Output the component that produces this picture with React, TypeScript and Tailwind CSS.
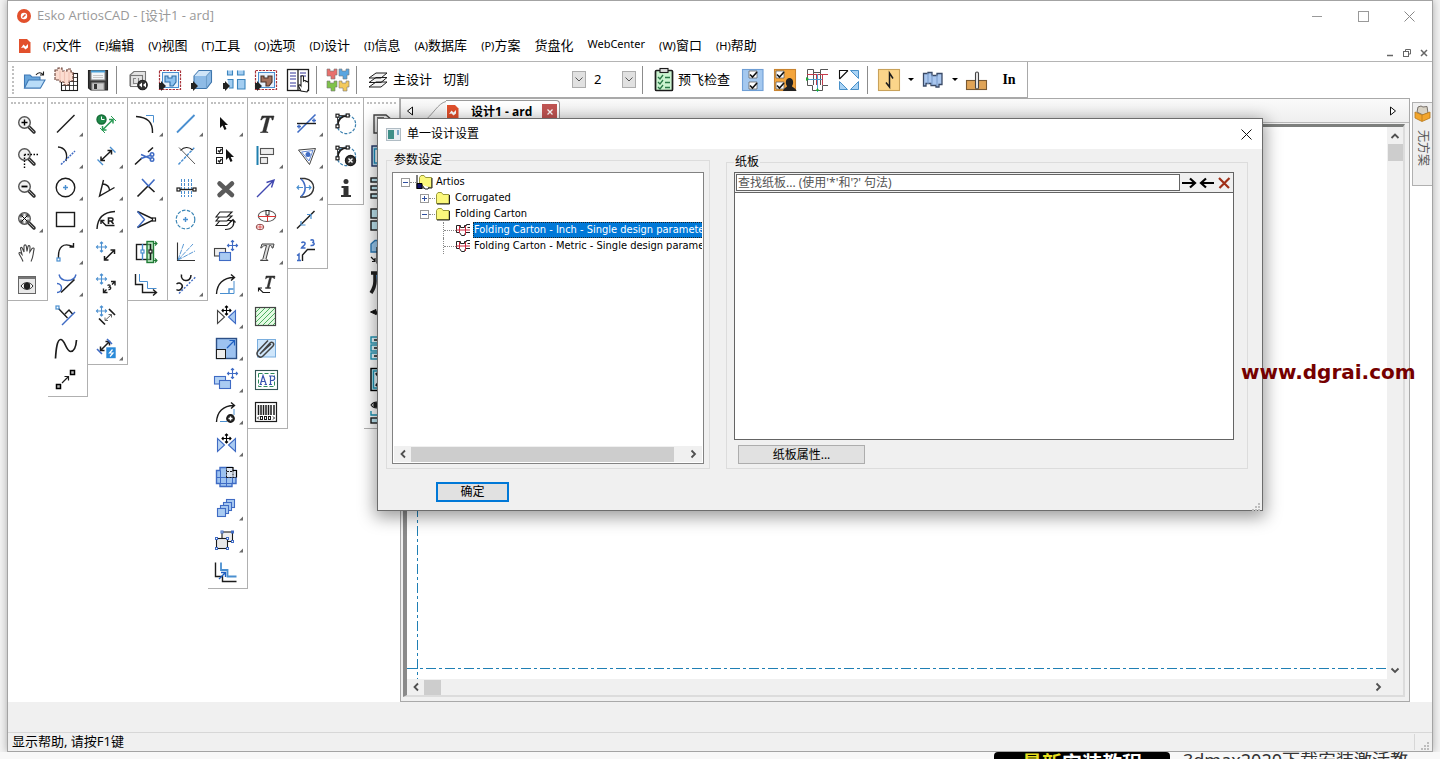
import React, { useState } from 'react';

const BLUE = '#4a8fd0';
const NAVY = '#3f6bc4';
const INK = '#1c1c1c';

type IconProps = { children: React.ReactNode };

// Palette glyphs share one 39x32 cell, toolbar glyphs a 32x32 one
const Cell: React.FC<IconProps> = ({ children }) => (
  <svg width="39" height="32" viewBox="0 0 39 32" fill="none" stroke={INK} strokeWidth="1.4" aria-hidden="true">
    {children}
  </svg>
);

const Tool: React.FC<IconProps> = ({ children }) => (
  <svg width="32" height="32" viewBox="0 0 32 32" fill="none" stroke={INK} strokeWidth="1.1" aria-hidden="true">
    {children}
  </svg>
);

const Move = ({ x, y, r = 5, c = BLUE }: { x: number; y: number; r?: number; c?: string }) => (
  <g transform={`translate(${x} ${y})`} stroke={c} strokeWidth="1.1">
    <path d={`M${-r} 0H${r}M0 ${-r}V${r}`} />
    <path d={`M${-r + 1.5} -1.5L${-r} 0L${-r + 1.5} 1.5M${r - 1.5} -1.5L${r} 0L${r - 1.5} 1.5M-1.5 ${-r + 1.5}L0 ${-r}L1.5 ${-r + 1.5}M-1.5 ${r - 1.5}L0 ${r}L1.5 ${r - 1.5}`} />
  </g>
);

const Node = ({ x, y, c = INK }: { x: number; y: number; c?: string }) => (
  <rect x={x - 1.5} y={y - 1.5} width="3" height="3" stroke={c} fill="#fff" strokeWidth="1.2" />
);

// Free-standing end point, larger than the handles on a shape
const EndPoint = ({ x, y }: { x: number; y: number }) => (
  <rect x={x - 2} y={y - 2} width="4" height="4" stroke="#000" fill="#bbb" strokeWidth="1.5" />
);

const Plus = ({ x, y, r = 2.5, c = BLUE }: { x: number; y: number; r?: number; c?: string }) => (
  <path d={`M${x - r} ${y}H${x + r}M${x} ${y - r}V${y + r}`} stroke={c} />
);

// Double headed arrow running up to the right
const Span = ({ x1, y1, x2, y2, c = INK }: { x1: number; y1: number; x2: number; y2: number; c?: string }) => (
  <path
    d={`M${x1} ${y1}L${x2} ${y2}M${x1} ${y1 - 4}V${y1}H${x1 + 4}M${x2 - 4} ${y2}H${x2}V${y2 + 4}`}
    stroke={c}
    strokeWidth="1.5"
  />
);

const Lens = ({ children }: { children?: React.ReactNode }) => (
  <>
    <path d="M20.5 18.5L26 24" stroke="#333" strokeWidth="3.5" strokeLinecap="round" />
    <path d="M21 19L26 24" stroke="#aaa" strokeWidth="1" />
    <circle cx="16.5" cy="14.5" r="5.8" fill="#f1f1f1" stroke="#555" />
    {children}
  </>
);

const Cursor = ({ x, y }: { x: number; y: number }) => (
  <path d={`M${x} ${y}V${y + 11}L${x + 2.5} ${y + 8.5}L${x + 4.5} ${y + 13}L${x + 6.5} ${y + 12}L${x + 4.7} ${y + 8}H${x + 8}Z`} fill="#111" stroke="none" />
);

const CurvePoints = () => (
  <>
    <circle cx="18.3" cy="16.3" r="9.3" stroke="#3a7fae" strokeWidth="1.2" strokeDasharray="3 1.5" />
    <path d="M9.5 18C10 11 13 8 20 7.5" strokeWidth="2" />
    <path d="M9.5 18V7.5H20" stroke="#444" strokeWidth="1" />
    <Node x={9.5} y={7.7} />
    <Node x={19.7} y={7.5} />
    <Node x={9.5} y={18.3} />
  </>
);

const ZOOM_ICONS = [
  <Lens><Plus x={16.5} y={14.5} r={3} c="#000" /></Lens>,
  <Lens><path d="M16.5 14.5H30M16.5 14.5V28" stroke="#000" strokeDasharray="1.5 1.5" /></Lens>,
  <Lens><path d="M13.5 14.5H19.5" stroke="#000" strokeWidth="1.8" /></Lens>,
  <Lens><path d="M14 12L19 17M19 12L14 17M13 13.5V11H15.5M17.5 11H20V13.5M20 15.5V18H17.5M15.5 18H13V15.5" stroke="#000" strokeWidth="1" /></Lens>,
  <path d="M15 25.500C14 22 12 20 11 17.500C11 16 12.500 16 13.500 18L14 18.500L12.500 12.500C12.500 11 14 11 14.500 12.500L16 16L16 10C16.200 8.500 18 8.500 18.300 10L19 15.500L20 10.500C20.500 9 22 9.500 22 11L21.800 16L24 12.500C25 11.500 26.500 12 26 13.500C25 17 25.500 21 23 25.500" stroke="#444" strokeWidth="1.1" fill="#fff" />,
  <>
    <rect x="10.5" y="8.5" width="17" height="17" fill="#e9e9e9" stroke="#666" strokeWidth="1" />
    <path d="M11 10H27" stroke="#777" strokeWidth="2" />
    <path d="M13 18C16 13.5 22 13.5 25 18C22 22.5 16 22.5 13 18Z" fill="#fff" stroke="#222" strokeWidth="1" />
    <circle cx="19" cy="18" r="2.5" fill="#222" />
  </>,
];

const LINE_ICONS = [
  <path d="M9 24.5L26.5 7" />,
  <><path d="M10 7C17 7.5 20 13 18 21" /><path d="M13 24.5L27 11" stroke={NAVY} strokeDasharray="2 1" strokeWidth="1.5" /></>,
  <><circle cx="17.5" cy="15.5" r="9.3" /><Plus x={17.5} y={15.5} /></>,
  <rect x="8.5" y="8.5" width="18" height="14" />,
  <><path d="M10.5 22C10 11 15 6 25 10.5M25.5 7V11H21.5" /><Node x={10.5} y={23.5} c={BLUE} /></>,
  <><path d="M11 6.5C13 14.5 26 14.5 28 6.5M9 15.5C15 15.5 15 24.5 9 24.5" stroke={NAVY} strokeWidth="1.4" /><path d="M13 24.5L26.5 11.5" strokeWidth="1.6" /></>,
  <><path d="M10 8L19.5 18M17 14L21 10L25 14.5" /><path d="M14 25L27 12" stroke={NAVY} strokeWidth="1.5" /><Node x={9.5} y={7.5} c={BLUE} /></>,
  <path d="M7.5 26.5C8 18 9 7 13 7.5C17 8 18 19 22.500 19.500C26 19.500 28 15 28.500 8" strokeWidth="1.7" />,
  <><EndPoint x={10.5} y={22.5} /><EndPoint x={24.5} y={8.5} /><path d="M14 19L20.500 12.500M16.500 12.500H20.500V16.500" strokeWidth="1.2" /></>,
];

const DIMENSION_ICONS = [
  <><Span x1={14.5} y1={22} x2={25} y2={11.5} c="#2a9a55" /><path d="M12 20L17 25M23 8L28 13" stroke="#2a9a55" strokeWidth="1" /><circle cx="13.5" cy="11.5" r="4.5" fill="#1f8a4a" stroke="#146b36" /><path d="M13.5 8.5V11.5H16.5" stroke="#fff" strokeWidth="1" /></>,
  <><Span x1={13} y1={20.5} x2={23.5} y2={10.5} /><path d="M9.5 19.5L15 25M22 7L27.5 12.5" stroke={BLUE} strokeWidth="1.4" /></>,
  <><path d="M15.5 8L11.5 24L26.5 15.5" /><path d="M14.5 12C19 12 21.5 15 21.5 18" /></>,
  <><path d="M9 25C9.5 14 15 8 27 7.5M26.5 21.5H18L13 16.5M13 20V16.5H16.5" /><path d="M20.5 20V14H23.5C25.5 14 25.5 17 23.5 17H20.5M23 17L25.5 20" strokeWidth="1.6" /></>,
  <><Move x={13.5} y={11} /><Span x1={16.5} y1={24} x2={26.5} y2={14} /></>,
  <><Move x={13.5} y={11} /><path d="M15.5 20.5V24.5H19.5M23 13.5H27V17.500M15.500 24.500L18.500 21.500M24 16.500L27 13.500" strokeWidth="1.4" /><path d="M19.500 17.500C21.500 16 23 17.500 21.500 19C23.500 19 23 22 20.500 21.500" strokeWidth="1.3" /></>,
  <><Move x={13.5} y={11} /><path d="M21 9L27 15M11 18.5L17 24.5" strokeWidth="1.7" /><path d="M17 20.5L23.500 14.500M17 17.500V20.500H20M20.500 14.500H23.500V17.500" stroke="#666" strokeWidth="1" /></>,
  <><Span x1={12.5} y1={18.5} x2={21.5} y2={9.5} /><path d="M9 17L14 22M19 7L24 12" stroke={NAVY} strokeWidth="1.6" /><rect x="19" y="16" width="8" height="9.5" fill="#2b8bd9" stroke="#2b8bd9" /><path d="M24.5 17.5L21.5 21H25L22 24.5" stroke="#fff" strokeWidth="1.2" /></>,
];

const EDIT_ICONS = [
  <><path d="M8 8.5C19 9 25 14 24.5 25" /><path d="M18 7.5H25.5V14.5" stroke={BLUE} strokeWidth="1" /></>,
  <><path d="M7 24.5L14 18M20 12L25 7.5" strokeWidth="1.6" /><path d="M13 14.5L23.5 19M13 18.5L23.5 15" stroke={NAVY} strokeWidth="1.4" /><circle cx="24" cy="14.5" r="1.8" stroke={NAVY} /><circle cx="24" cy="19.5" r="1.8" stroke={NAVY} /></>,
  <><path d="M9.5 24.5L20 14L26.5 20" strokeWidth="1.6" /><path d="M14 7L20.500 14L26.500 7.500" stroke={NAVY} strokeWidth="1.6" /></>,
  <><path d="M9.5 7.5L26.5 15.5L9.5 23.5" /><path d="M9.5 7.5L16.500 15.500L9.500 23.500" stroke={NAVY} /><Node x={26} y={15.5} /></>,
  <><rect x="8.5" y="8.5" width="14" height="15" /><path d="M14.5 8V24" stroke={BLUE} /><rect x="19" y="5.5" width="6.5" height="21" fill="#7ad58a" fillOpacity="0.5" stroke="#1f7a35" /><path d="M22.5 8V24" /><Node x={14.5} y={15.5} c={BLUE} /><Node x={22.5} y={15.5} /><path d="M25 7.5H29M27 5.5L29 7.5L27 9.5M25 24.5H29M27 22.5L29 24.5L27 26.5" stroke="#1f7a35" strokeWidth="1.1" /></>,
  <><path d="M7.5 6V16.5H14.5V24.5H28M25 21.5L28.500 24.500L25 27.500" /><path d="M11.5 6V13.5H19.5V20.5H28.5" stroke={BLUE} strokeWidth="1" /></>,
];

const CONSTRUCTION_ICONS = [
  <path d="M9 24.5L26.5 7" stroke={BLUE} strokeWidth="1.8" />,
  <><path d="M10.5 24.5L26.5 7.5" stroke={BLUE} strokeDasharray="3 1" /><path d="M11 7.5L27 24" stroke="#333" strokeWidth="0.8" /><path d="M12.5 10.5C16 6.5 21 6.5 24.5 10" strokeWidth="1.1" /></>,
  <><path d="M13.5 7V25M16.5 7V25M20.5 7V25M23.5 7V25" stroke={BLUE} strokeWidth="1" strokeDasharray="3 1" /><path d="M10.5 17.5H26.5" /><Node x={10.5} y={17.5} /><Node x={26.5} y={17.5} /></>,
  <><circle cx="17.5" cy="15.5" r="9.3" stroke="#3a85b5" strokeWidth="1.2" strokeDasharray="3.5 1.5" /><Plus x={17.5} y={15.5} /></>,
  <><path d="M9.5 6.5V24.5H27" stroke="#333" strokeWidth="1.1" /><path d="M10 24L16 7M10 24L25 8M10 24L27 15" stroke={BLUE} strokeWidth="0.9" strokeDasharray="5 1" /></>,
  <><path d="M13.5 6.5C12 14 23 15 23 7M8.5 16C12 13.5 16 17 13.5 20.5C12 23 9.5 22.5 8.5 21.5" strokeWidth="1.5" /><path d="M11 25.5L28 8.5" stroke={NAVY} strokeDasharray="2 1.5" strokeWidth="1.4" /></>,
];

const Mirror = ({ filled = false }: { filled?: boolean }) => (
  <>
    <path d="M9.5 10.5V23.5L16.5 17Z" fill={filled ? '#b9d4f3' : '#fff'} stroke={filled ? NAVY : '#444'} strokeWidth="1.1" />
    <path d="M27.5 10.5V23.5L20.5 17Z" fill="#a9cbf2" stroke={NAVY} strokeWidth="1.1" />
    <Move x={18.5} y={10.5} r={4.5} c="#000" />
  </>
);

const MoveCopy = ({ filled = false }: { filled?: boolean }) => (
  <>
    <rect x="6.5" y="12.5" width="11" height="7.5" fill={filled ? '#b4d2f4' : '#eee'} stroke={filled ? NAVY : '#444'} strokeWidth="1.1" />
    <rect x="11.5" y="16.5" width="11" height="8" fill="#a9cbf2" stroke={NAVY} strokeWidth="1.1" />
    <Move x={24.5} y={9.5} c={NAVY} />
  </>
);

const SELECT_ICONS = [
  <Cursor x={12} y={9} />,
  <><rect x="8.5" y="7.5" width="6" height="6" strokeWidth="1" /><rect x="8.5" y="17.5" width="6" height="6" strokeWidth="1" /><path d="M10 10.5L11.5 12L13.5 9M10 20.5L11.5 22L13.5 19" /><Cursor x={18} y={9} /></>,
  <path d="M11.5 11.5L24 23M24 11.5L11.5 23" stroke="#5a5a5a" strokeWidth="4.5" strokeLinecap="round" />,
  <><path d="M8 21.500H19L24 16.500H12Z" fill="#fff" strokeWidth="1.1" /><path d="M8 17H19L24 12H12Z" fill="#fff" strokeWidth="1.1" /><path d="M8 13H19L24 8H12Z" fill="#fff" strokeWidth="1.1" /><path d="M17 25.500C25 25.500 27 20 25 16M22 18L25 15.500L27.500 18.500" strokeWidth="1.2" /></>,
  <MoveCopy />,
  <><path d="M8.5 26C9 16 15 9.5 26 9.5M23 6.5L26.5 9.5L23 12.5" /><path d="M12 25.5H26V13" stroke={BLUE} strokeWidth="1" /><path d="M21 25V21H25.5" stroke={BLUE} /></>,
  <Mirror />,
  <><rect x="8.5" y="6.5" width="20" height="20" fill="#9dc2f0" stroke="#2c4f86" /><rect x="8.5" y="17.5" width="9" height="9" fill="#eee" strokeWidth="1" /><path d="M19 16L26 9M21.5 8.5H26.5V13.5" stroke="#1f5fc0" strokeWidth="1.2" /></>,
  <MoveCopy filled />,
  <><path d="M8.5 26C9 16 15 9.5 26 9.5M23 6.5L26.5 9.5L23 12.5" /><path d="M12 25.5H19M26 13V19" stroke={BLUE} strokeWidth="1" /><circle cx="22.5" cy="22.5" r="3.7" fill="#222" /><Plus x={22.5} y={22.5} r={2} c="#fff" /></>,
  <Mirror filled />,
  <><path d="M12 7.5H24V10.5H28V23.5H24V26.5H12V23.5H8.5V10.5H12Z" fill="#9dc2f0" stroke={NAVY} /><path d="M12.5 10.5V23.5M18.5 7.5V26.5M24.5 10.5V23.5M8.5 17.5H28M12 23.5H24" stroke={NAVY} strokeWidth="1" /><path d="M18.5 7.5H25V10.5H28.5V17H18.5Z" fill="#dce4ef" stroke="none" /><path d="M18.5 17.5V7.5M18.5 17.5H28M25 10.5V17M19 11.5H25" strokeWidth="1" strokeDasharray="2 1" /><path d="M18.5 7.5H25V10.5H28.5V17.5" stroke="#000" strokeWidth="1.2" /></>,
  <>{[0, 1, 2, 3].map(n => <rect key={n} x={18.5 - n * 3} y={7.5 + n * 3} width="8" height="8" fill="#a9cbf2" stroke={NAVY} strokeWidth="1.1" />)}</>,
  <><rect x="14" y="8" width="10.5" height="9.5" fill="#eee" strokeWidth="1.1" /><rect x="8.5" y="14.5" width="11" height="10" fill="#e8e8e8" strokeWidth="1.1" />{[[14, 8], [24.5, 8], [24.5, 17.5], [8.5, 14.5], [19.5, 14.5], [8.5, 24.5], [19.5, 24.5]].map(([x, y]) => <rect key={`${x}-${y}`} x={x - 1} y={y - 1} width="2" height="2" fill="#fff" stroke={NAVY} strokeWidth="1" />)}</>,
  <><path d="M7.5 6.5V20.5H14.5V25.5H28.5" /><path d="M13 6.5V14H19.5V20.5H28.5" stroke={BLUE} strokeWidth="1.8" /><path d="M11 23L17 17M13 16.5H17.5V21" stroke="#1f5fc0" /></>,
];

const TEXT_T = 'M14 8H26L25 12H24C24 10 23.5 9.5 21.5 9.5L18 23C18 23.5 19 24 20 24V24.5H12.5V24C14 24 14.5 23.5 15 22.5L18.5 9.5C16 9.5 14.5 10 13.5 12H12.7Z';

const ANNOTATE_ICONS = [
  <path d={TEXT_T} fill="#333" strokeWidth="0.5" />,
  <><path d="M9.5 6V25" stroke="#1f7fae" strokeWidth="2" /><rect x="12.5" y="8.5" width="13" height="6" fill="#eee" stroke="#555" strokeWidth="1.1" /><rect x="12.5" y="17.5" width="7" height="6" fill="#eee" stroke="#555" strokeWidth="1.1" /></>,
  <path d="M9 25L25.5 8.5M18.5 10.5L26 8L23.5 15.5" stroke="#4148b0" strokeWidth="1.4" />,
  <><ellipse cx="19" cy="12" rx="8.7" ry="5.5" fill="#fff" stroke="#555" strokeWidth="1.1" /><path d="M10 12.5H28M19.5 6.5V17.5" stroke="#d33" strokeWidth="1" /><rect x="18" y="6.5" width="3" height="4.5" fill="#fff" strokeWidth="0.9" /><ellipse cx="12" cy="23" rx="3.8" ry="2.7" stroke="#833" strokeWidth="0.9" /><path d="M9 23H15M12 21V25" stroke="#d33" strokeWidth="0.8" /></>,
  <path d={TEXT_T} fill="#ddd" stroke="#444" strokeWidth="1" />,
  <><path d="M18 8H27L26.5 11C25.5 9.5 25 9.5 23.5 9.5L21 19.5H22.5V20.5H17.5V19.5H19L21.5 9.5C20 9.5 19 9.5 17.5 11Z" fill="#333" strokeWidth="0.4" /><path d="M22 24.5H15L10.5 20M10.5 23.500V20H14" strokeWidth="1.1" /></>,
  <><rect x="7.5" y="7.5" width="20" height="18" fill="#e3fbe3" stroke="#444" strokeWidth="1.2" /><path d="M8 12L12 8M8 17L17 8M8 22L22 8M10 25L27 8M15 25L27 13M20 25L27 18M25 25L27 23" stroke="#2a9a40" strokeWidth="0.8" /></>,
  <><rect x="9.5" y="7.5" width="18" height="17.5" fill="#cfe6fb" stroke="#7aaede" strokeWidth="1" /><path d="M12 22L22 11C24 9 27 11.5 25 14L15 24C12 27 7 23 10 19L20 8.5M14 20L23 12" stroke="#444" strokeWidth="1.5" /></>,
  <><rect x="7.5" y="6.5" width="22" height="19" fill="#fff" stroke="#355" strokeWidth="1.1" /><rect x="10.5" y="9.5" width="16" height="13" stroke="#2a8a5a" strokeDasharray="4 2" strokeWidth="1" /><path d="M11.5 20.5H14M16.5 20.5H19M12.5 20L15 11.5L18 20M13.5 17.5H17M21 20.5H24M22.5 20V12M21 12H24.5C27.5 12 27.5 16.5 24 16.5H22.5" stroke="#3a55b0" strokeWidth="1.2" /></>,
  <><rect x="7.5" y="6.5" width="21" height="19" fill="#fff" strokeWidth="1.2" /><path d="M10.5 9V19M13 9V19M15.5 9V19M18 9V19M20.5 9V19M23 9V19M26 9V19" strokeWidth="1.5" /><path d="M11 20.5L9.5 22L11 23.5M25 20.5L26.5 22L25 23.500" strokeWidth="1" /><rect x="12.5" y="20.5" width="2" height="3" strokeWidth="1" /><rect x="16.5" y="20.5" width="2" height="3" strokeWidth="1" /><rect x="20.5" y="20.5" width="2" height="3" strokeWidth="1" /></>,
];

const LINK_ICONS = [
  <><path d="M9.5 24.5L27.5 6.5" stroke={NAVY} strokeWidth="1.6" /><path d="M9 15.5H28" /><Plus x={11} y={18.5} r={2} c={NAVY} /><Plus x={26} y={12.5} r={2} c={NAVY} /></>,
  <><path d="M10.5 10L27.5 8.5L21.5 24.5Z" stroke="#444" strokeWidth="1" /><path d="M13.500 12L25 10.500L21 21Z" stroke={NAVY} strokeWidth="0.8" /><circle cx="20" cy="14.500" r="2.500" fill={NAVY} stroke="none" /></>,
  <><path d="M12 6.5H17C28.5 8 28.5 23 17 25H12" stroke="#333" /><path d="M13 7C18.5 12 18.5 20 13 24.5" stroke={NAVY} strokeWidth="1.6" /><path d="M9 15.5H15M11 13.5L9 15.5L11 17.5M18 15.5H23M21 13.5L23 15.5L21 17.5" stroke={BLUE} strokeWidth="1.1" /></>,
  <><path d="M9 24.5L26.5 7" /><path d="M13 17V21H17.5M19 10.5H23V15" stroke={BLUE} strokeWidth="1.2" /></>,
  <><path d="M14.5 25V19L19.5 13.5H27" /><path d="M9 19.5L11 18V24.5M9 24.5H13M13.5 7C14.5 5.5 17.5 6 17 8C17 9.5 14 10.5 13.5 12H17.5M22.5 4.5C24 3 26.5 4 25 6.5C27 7 26.5 10 22.5 9.5" stroke={NAVY} strokeWidth="1.5" /></>,
];

const INFO_ICONS = [
  <CurvePoints />,
  <><CurvePoints /><circle cx="22.5" cy="20.5" r="5" fill="#333" /><path d="M20.5 18.5L24.5 22.5M24.5 18.5L20.5 22.5" stroke="#fff" /></>,
  <><circle cx="18" cy="9.5" r="2.5" fill="#333" stroke="none" /><path d="M13.5 14H20.5V23H23V25H13V23H15.5V16H13.5Z" fill="#333" stroke="none" /></>,
];

const LAYOUT_ICONS = [
  <path d="M10 7H22L28 12V25H10ZM13 10H20M13 13H22" fill="#eee" stroke="#444" />,
  <><rect x="8" y="6" width="20" height="20" fill="#bfe3f5" stroke="#236" /><rect x="10.5" y="9" width="15" height="14" fill="#fff" stroke="#1b8fc0" /></>,
  <>{[6, 14, 22].map(y => <rect key={y} x="7" y={y} width="20" height="4" fill="#c4ecf8" />)}</>,
  <>{[5, 17].map(y => <rect key={y} x="7" y={y} width="18" height="9" fill="#c4ecf8" />)}</>,
  <><path d="M7 8L11 4.500H24V16H7Z" fill="#9dcdf3" stroke="#2d79b5" /><path d="M7 21L11 25M11 22V25.500H8M13 11V27H20" strokeWidth="1.2" /></>,
  <><path d="M7 5H20M11 6V13C11 18 9 22 7 25" stroke="#222" strokeWidth="3.5" /><path d="M12 7H18V14H13Z" fill={BLUE} stroke="none" /></>,
  <><path d="M6.500 12L12 9.500V14.500Z" fill="#111" strokeWidth="1" /><path d="M11 12C14 12 14 17 18 20" strokeWidth="2.5" /></>,
  <>{[5, 13, 21].map(y => <rect key={y} x="7" y={y} width="20" height="6" fill="#e8faff" stroke="#1b94b5" />)}<path d="M10 8H14M10 16H14M10 24H14" /></>,
  <><rect x="7" y="4.5" width="22" height="22" fill="#bdeaf5" stroke="#000" /><rect x="9.5" y="7" width="18" height="17" fill="#e8faff" stroke="#1b94b5" /><path d="M12 9L17 15.5L12 22" strokeWidth="2.5" /></>,
  <><path d="M7 9C10 5 15 5 18 9C15 13 10 13 7 9Z" strokeWidth="1.1" /><circle cx="12" cy="9" r="2" fill="#222" /><path d="M7 15V19H20" stroke="#1b94b5" /><rect x="7" y="22" width="20" height="5" fill="#c4ecf8" /></>,
];

type Palette = { name: string; icons: React.ReactNode[]; flyouts: number[]; narrow?: boolean };

const PALETTES: Palette[] = [
  { name: 'View', icons: ZOOM_ICONS, flyouts: [3] },
  { name: 'Geometry', icons: LINE_ICONS, flyouts: [0, 1, 2, 3, 4, 5] },
  { name: 'Dimension', icons: DIMENSION_ICONS, flyouts: [1, 2, 3, 7] },
  { name: 'Edit', icons: EDIT_ICONS, flyouts: [0, 2] },
  { name: 'Construction', icons: CONSTRUCTION_ICONS, flyouts: [0, 5] },
  { name: 'Select', icons: SELECT_ICONS, flyouts: [0, 5, 6, 7, 8, 9, 10, 12, 13] },
  { name: 'Annotate', icons: ANNOTATE_ICONS, flyouts: [1, 3, 4] },
  { name: 'Link', icons: LINK_ICONS, flyouts: [0, 1, 2] },
  { name: 'Info', icons: INFO_ICONS, flyouts: [], narrow: true },
  { name: 'Layout', icons: LAYOUT_ICONS, flyouts: [], narrow: true },
];

const MENUS = [
  ['(F)', '文件'], ['(E)', '编辑'], ['(V)', '视图'], ['(T)', '工具'], ['(O)', '选项'], ['(D)', '设计'], ['(I)', '信息'],
  ['(A)', '数据库'], ['(P)', '方案'], ['', '货盘化'], ['WebCenter', ''], ['(W)', '窗口'], ['(H)', '帮助'],
];

const FILE_TOOLS = [
  <><path d="M6.5 24V11H12L14 13H22V24Z" fill="#6aa7dc" stroke="#3f79b5" /><path d="M6.5 24L10.5 16H27L22.5 24Z" fill="#b9dcf8" stroke="#3f79b5" /><path d="M18 11C20 8 23 8 25 10.5M25.5 7.5V11H22" /></>,
  <><rect x="11.5" y="9.5" width="16" height="17" fill="#fff" /><path d="M11 13.5H27M11 17.5H27M11 21.5H27M15.5 9V27M19.5 9V27M23.5 9V27" strokeWidth="0.8" /><path d="M5 6H8V4H12V7H17V5H21V8H23V17H19V21H14V18H10V16H5Z" fill="#fbdcd0" stroke="#6a4339" strokeDasharray="3 1" /><path d="M10 7V17M14.5 7V18M19 8V18" stroke="#eec2b4" /></>,
  <><path d="M6.5 6.5H25.5V26H9L6.5 24Z" fill="#3a3a3a" stroke="#222" /><rect x="9" y="7" width="14" height="9" fill="#f2f6f8" stroke="#888" /><path d="M9 7.5H23" stroke="#49a0d8" strokeWidth="2" /><path d="M11 11.5H21M11 13.5H21" stroke="#bbb" strokeWidth="0.8" /><rect x="10" y="19" width="12" height="7" fill="#ccc" stroke="#999" /><rect x="12" y="20" width="3" height="5" fill="#333" stroke="none" /></>,
];

const EnterArrow = () => <path d="M5 19H7V17L12 22L7 27V25H5Z" fill="#222" stroke="none" />;

const Frame = ({ c, edge }: { c: string; edge: string }) => (
  <>
    <rect x="8.5" y="8.500" width="16" height="15" fill="#e6f1fb" stroke={BLUE} strokeWidth="1" />
    <rect x="5.5" y="6.5" width="21" height="19" stroke="#a8323a" strokeWidth="1.2" strokeDasharray="2.5 1" />
    <path d="M11 12H14V14H18V12H22V18L19 22H16V18H11Z" fill={c} stroke={edge} />
    <EnterArrow />
  </>
);

const MODE_TOOLS = [
  <><path d="M8 22V11L12 7.5H23.5V18" stroke="#777" fill="#e4e4e4" /><rect x="8.5" y="11.5" width="12" height="11" stroke="#777" /><path d="M14 14.5H11.5V19.5H15M16.5 14V18" stroke="#888" /><circle cx="20.5" cy="21" r="4.8" fill="#333" /><path d="M20 18.5V23.5L17 21ZM24 18.5V23.5L21 21Z" fill="#fff" stroke="none" /></>,
  <Frame c="#8ec2ef" edge="#2c6da8" />,
  <><path d="M8 12L13 6.5H25.5V18L20.5 24.5H8Z" fill="#8ebbe6" stroke="#3d75ac" /><path d="M8.5 12L13 7H25L20.500 12Z" fill="#cfe4f7" stroke="none" /><path d="M20.5 12V24.500M20.500 12L25.500 6.500" stroke="#6f9fcb" /><EnterArrow /></>,
  <><path d="M9.5 6.5V11H14.5V6.500M19.500 6.500V11H26V6.500M19.500 15.500H27V25H19.500Z" fill="#a3cdf1" stroke="#3b84bd" /><path d="M9.500 15.500H15V24H11" fill="#a3cdf1" stroke="#3b84bd" /><EnterArrow /></>,
  <Frame c="#a2705c" edge="#4a332b" />,
  <><rect x="5.5" y="5.5" width="21" height="21" fill="#fff" strokeWidth="1.3" /><path d="M16 5V27" strokeWidth="1.3" /><path d="M8 9H14M8 12H14M8 15H14M8 19H14M8 22H14M18 9H24M18 12H24" stroke="#33379a" /><path d="M19 27L16.5 22C16.5 20.5 18 20.5 19 22V12.5C19.5 11.5 21 11.5 21.5 12.5V17C22.5 16 24 16.5 24 17.5C25 17 26.5 18 26.5 19V25L25 28Z" fill="#fff" /></>,
];

const Shape = ({ x, y, c }: { x: number; y: number; c: string }) => (
  <path d={`M${x} ${y}H${x + 3}V${y + 2}H${x + 7}V${y}H${x + 10}V${y + 6}L${x + 8} ${y + 6}V${y + 10}H${x + 4}V${y + 7}H${x}Z`} fill={c} stroke="#777" strokeWidth="0.6" />
);

const CHECK_TOOLS = [
  <><rect x="5.5" y="5.5" width="20.5" height="21" fill="#a4c8ef" stroke="#6f9fd6" /><path d="M12 7H20V14H12ZM12 18H20V25H12Z" fill="#fff" stroke="#666" strokeWidth="0.8" /><path d="M13 10.5L15.5 13L20 8M13 21.5L15.5 24L20 19" stroke="#111" strokeWidth="1.6" /></>,
  <><rect x="5.5" y="5.5" width="21" height="21" fill="#f4a53c" stroke="#c98430" /><path d="M7 7H15V14H7ZM7 18H15V25H7Z" fill="#fff" stroke="#666" strokeWidth="0.8" /><path d="M8 10.5L10.5 13L15 8M8 21.5L10.5 24L15 19" stroke="#111" strokeWidth="1.6" /><path d="M14 27C15 23.5 18 23.5 18 22C16 19.5 16.5 14 20.5 14C24.5 14 25 19.5 23 22C23 23.5 26.5 23.5 27.5 27Z" fill="#222" stroke="none" /></>,
  <><path d="M6.5 5.500H12.500V8.500H19.500V5.500H27M27 21.500H21.500V26.500H11.500V21.500H6.500V5.500M12.500 8V21M19.500 8V21" stroke="#555" strokeWidth="1" /><path d="M6 10.5H27M15.5 10V21M21.5 10V21" stroke="#c43a4a" strokeWidth="1" /><path d="M5 15.5H21M16.5 10V28" stroke="#4b9bd0" strokeWidth="1" /><path d="M5 13V17L8 15ZM14.5 27H18.5L16.5 24Z" fill="#2a3" stroke="none" /></>,
  <><path d="M6.5 15V6.5H15M6.5 15L15 6.5" stroke="#111" /><path d="M17.5 6.5H25.5V14.5ZM25.5 17.5V25.500H17.500ZM6.500 17.500V25.500H14.500Z" fill="#a9d3f5" stroke="#4990c8" strokeWidth="1" /></>,
];

const Separator = () => (
  <span className="flex w-2 shrink-0 pl-0.5"><span className="h-7 w-px bg-[#8c8c8c]" /></span>
);

const ToolButton = ({ label, children }: { label: string; children: React.ReactNode }) => (
  <button type="button" aria-label={label} className="w-8 shrink-0"><Tool>{children}</Tool></button>
);

const Caret = ({ label }: { label: string }) => (
  <button type="button" aria-label={label} className="flex w-3 justify-center">
    <svg width="6" height="4" viewBox="0 0 6 4" aria-hidden="true"><path d="M0 0H6L3 3Z" fill="#000" /></svg>
  </button>
);

const Chevron = ({ turn, c = '#505050' }: { turn: 'up' | 'down' | 'left' | 'right'; c?: string }) => {
  const d = { up: 'M1.5 7L5 3.5L8.5 7', down: 'M1.5 3.5L5 7L8.5 3.5', left: 'M7 1.5L3.5 5L7 8.5', right: 'M3.5 1.5L7 5L3.5 8.5' }[turn];
  return <svg width="10" height="10" viewBox="0 0 10 10" fill="none" stroke={c} strokeWidth="1.8" aria-hidden="true"><path d={d} /></svg>;
};

const DropDown = ({ label, value, options, width, onChange }: { label: string; value: string; options: string[]; width: string; onChange: (v: string) => void }) => (
  <span className={`relative flex h-6 items-center ${width}`}>
    <select
      aria-label={label}
      value={value}
      onChange={e => onChange(e.target.value)}
      className="h-full w-full appearance-none bg-transparent pl-1 outline-none"
    >
      {options.map(o => <option key={o}>{o}</option>)}
    </select>
    <span className="pointer-events-none absolute right-0 flex h-[17px] w-[14px] items-center justify-center border border-[#adadad] bg-[#e1e1e1]">
      <svg width="8" height="5" viewBox="0 0 8 5" fill="none" stroke="#555" aria-hidden="true"><path d="M0.5 0.5L4 4L7.5 0.5" /></svg>
    </span>
  </span>
);

const DocIcon = () => (
  <svg width="13" height="14" viewBox="0 0 13 14" aria-hidden="true">
    <path d="M1 0H9L12.5 3.5V14H1Z" fill="#e2502c" />
    <path d="M3 9L5.5 5.5L7.5 7.5L10 5V8.5L7.5 10.5L5.5 8.5Z" fill="#fff" />
  </svg>
);

const TitleBar = () => (
  <header className="flex h-[30px] shrink-0 items-center bg-white pl-2 text-[13px] text-[#999]">
    <svg width="16" height="16" viewBox="0 0 16 16" aria-hidden="true">
      <circle cx="8" cy="8" r="7" fill="#e2502c" />
      <circle cx="8" cy="8" r="3.2" fill="#fff" />
      <path d="M6.5 9.5L9.5 6.5" stroke="#e2502c" strokeWidth="1.5" />
    </svg>
    <h1 className="ml-[5px] font-['Open_Sans','Noto_Sans_CJK_SC',sans-serif]">Esko ArtiosCAD - [设计1 - ard]</h1>
    <div className="ml-auto flex">
      <button type="button" aria-label="Minimize" className="flex w-[46px] justify-center">
        <svg width="11" height="11" viewBox="0 0 11 11" stroke="#999" aria-hidden="true"><path d="M0 5.5H10" /></svg>
      </button>
      <button type="button" aria-label="Maximize" className="flex w-[46px] justify-center">
        <svg width="11" height="11" viewBox="0 0 11 11" fill="none" stroke="#999" aria-hidden="true"><rect x="0.5" y="0.5" width="10" height="10" /></svg>
      </button>
      <button type="button" aria-label="Close" className="flex w-[46px] justify-center">
        <svg width="11" height="11" viewBox="0 0 11 11" stroke="#888" aria-hidden="true"><path d="M0.5 0.5L10.5 10.5M10.5 0.5L0.5 10.5" /></svg>
      </button>
    </div>
  </header>
);

const MenuBar = () => (
  <nav className="flex h-[31px] shrink-0 items-center border-b border-[#b4b4b4] bg-white pl-2.5">
    <DocIcon />
    <ul className="ml-3 flex gap-[14px] whitespace-nowrap">
      {MENUS.map(([key, label]) => (
        <li key={key + label}>
          <button type="button" className="flex items-baseline text-[13px]">
            <span className="text-[11px]">{key}</span>{label}
          </button>
        </li>
      ))}
    </ul>
    <div className="ml-auto flex gap-[9px] self-end pr-1 pb-1">
      <button type="button" aria-label="Minimize document"><svg width="8" height="8" viewBox="0 0 8 8" stroke="#666" strokeWidth="1.5" aria-hidden="true"><path d="M1 6.5H7" /></svg></button>
      <button type="button" aria-label="Restore document"><svg width="8" height="8" viewBox="0 0 8 8" fill="none" stroke="#666" aria-hidden="true"><path d="M2.5 2.5V0.5H7.5V5H5.5" /><rect x="0.5" y="2.5" width="5" height="5" /></svg></button>
      <button type="button" aria-label="Close document"><svg width="8" height="8" viewBox="0 0 8 8" stroke="#666" strokeWidth="1.5" aria-hidden="true"><path d="M1 1L7 7M7 1L1 7" /></svg></button>
    </div>
  </nav>
);

const ToolBar = () => {
  const [layer, setLayer] = useState('切割');
  const [pointage, setPointage] = useState('2');

  return (
    <div className="flex shrink-0 bg-white">
      <div className="flex h-9 items-center border-r border-b border-[#a9a9a9] pr-0.5 text-[13px]">
        <span className="ml-1 h-7 w-1.5 border-l-2 border-dotted border-[#c0c0c0]" />
        {FILE_TOOLS.map((icon, i) => <ToolButton key={i} label={`File tool ${i + 1}`}>{icon}</ToolButton>)}
        <Separator />
        {MODE_TOOLS.map((icon, i) => <ToolButton key={i} label={`Mode tool ${i + 1}`}>{icon}</ToolButton>)}
        <Separator />
        <ToolButton label="Shapes">
          <Shape x={5} y={5} c="#e8706c" />
          <Shape x={17} y={5} c="#5aa5e0" />
          <Shape x={5} y={17} c="#7fc24a" />
          <Shape x={17} y={17} c="#f3c95c" />
        </ToolButton>
        <Separator />
        <button type="button" className="flex w-[77px] shrink-0 items-center">
          <Tool>
            <path d="M7 23H19L25 18H14ZM7 18.5H19L25 13.5H14ZM7 14H19L25 9H14Z" fill="#f2f2f2" strokeWidth="1" />
          </Tool>
          <span className="-ml-px">主设计</span>
        </button>
        <DropDown label="Layer" value={layer} options={['切割', '压痕']} width="w-[147px]" onChange={setLayer} />
        <span className="w-1" />
        <DropDown label="Pointage" value={pointage} options={['1', '2', '3', '4']} width="w-[46px]" onChange={setPointage} />
        <span className="w-1" />
        <Separator />
        <button type="button" className="flex w-[89px] shrink-0 items-center whitespace-nowrap">
          <Tool>
            <rect x="7.5" y="6.500" width="17" height="20" rx="1" fill="#caf3cf" strokeWidth="1.7" />
            <rect x="12" y="4.5" width="8" height="4" fill="#ddd" />
            <path d="M10 13L12 15L15 11M10 18L12 20L15 16M10 23L12 25L15 21M17 13.5H22M17 18.5H22M17 23.5H22" stroke="#2a7a48" strokeWidth="1.3" />
          </Tool>
          <span className="-ml-0.5">预飞检查</span>
        </button>
        {CHECK_TOOLS.map((icon, i) => <ToolButton key={i} label={`Check tool ${i + 1}`}>{icon}</ToolButton>)}
        <Separator />
        <ToolButton label="Grain direction">
          <rect x="5.5" y="5.5" width="21" height="21" fill="#fbd58a" stroke="#c9a25a" />
          <path d="M13 18.5L16.5 23V9L20 14.500" strokeWidth="1.5" />
        </ToolButton>
        <Caret label="Grain options" />
        <ToolButton label="Side">
          <path d="M6.5 9.5H11V8.5H15V11.5H20V9.5H25V20.5H22V23H19V21.5H14V19.5H9V22H6.5Z" fill="#a9c6ee" stroke="#3a4a66" strokeWidth="1.3" />
          <path d="M11 9V20M15 11V21M20 11V22" stroke="#7b9dcc" />
        </ToolButton>
        <Caret label="Side options" />
        <ToolButton label="Rule">
          <rect x="5.5" y="16.5" width="20" height="9" fill="#e0a457" stroke="#7a5a33" />
          <rect x="14.5" y="8" width="3" height="17" rx="1.5" fill="#eee" stroke="#444" />
        </ToolButton>
        <button type="button" className="w-8 text-center font-['Liberation_Serif',serif] text-[14px] font-bold">In</button>
      </div>
    </div>
  );
};

const Palettes = () => (
  <aside className="flex shrink-0 items-start bg-white">
    {PALETTES.map(palette => (
      <div
        key={palette.name}
        role="toolbar"
        aria-label={palette.name}
        className={`flex shrink-0 flex-col overflow-hidden border-r border-b border-[#b0b0b0] ${palette.narrow ? 'w-9' : 'w-10'}`}
      >
        <span className="mx-[3px] mt-1 h-1.5 border-t-2 border-dotted border-[#c0c0c0]" />
        {palette.icons.map((icon, i) => (
          <button key={i} type="button" aria-label={`${palette.name} ${i + 1}`} className="h-8">
            <Cell>
              {icon}
              {palette.flyouts.includes(i) && <path d="M35 24.5V28.5H31Z" fill="#6a6a6a" stroke="none" />}
            </Cell>
          </button>
        ))}
      </div>
    ))}
  </aside>
);

const DesignPanel = () => (
  <main className="flex min-w-0 flex-1 flex-col border border-[#a9a9a9] bg-[#f0f0f0]">
    <div className="flex h-6 shrink-0 items-center border-b border-[#b8b8b8] bg-linear-to-b from-[#fafafa] to-[#efefef] pl-[5px]">
      <button type="button" aria-label="Previous tab">
        <svg width="8" height="10" viewBox="0 0 8 10" fill="#fff" stroke="#111" aria-hidden="true"><path d="M6.5 1V9L1.5 5Z" /></svg>
      </button>
      <div className="ml-2.5 flex h-full items-center self-end">
        <svg width="22" height="24" viewBox="0 0 22 24" fill="none" stroke="#9a9a9a" aria-hidden="true"><path d="M0 22C8 17 14 4 22 2.5" /></svg>
        <div className="flex h-[22px] items-center self-end rounded-tr-sm border-t border-r border-[#9a9a9a] bg-white pr-0.5">
          <DocIcon />
          <button type="button" className="ml-3 font-['Open_Sans','Noto_Sans_CJK_SC',sans-serif] text-[12px] font-bold">设计1 - ard</button>
          <button type="button" aria-label="Close tab" className="ml-2.5 flex h-[15px] w-[15px] items-center justify-center bg-[#c25553]">
            <svg width="6" height="6" viewBox="0 0 6 6" stroke="#fff" strokeWidth="1.3" aria-hidden="true"><path d="M0.5 0.5L5.5 5.5M5.5 0.5L0.5 5.5" /></svg>
          </button>
        </div>
      </div>
      <button type="button" aria-label="Next tab" className="mr-3 ml-auto">
        <svg width="8" height="10" viewBox="0 0 8 10" fill="#fff" stroke="#111" aria-hidden="true"><path d="M1.5 1V9L6.5 5Z" /></svg>
      </button>
    </div>

    <div className="mt-px mr-1 mb-1 ml-0.5 flex min-h-0 flex-1 flex-col border-t-[3px] border-r-2 border-b-2 border-l-4 border-t-[#7d7f7d] border-r-[#dcdcdc] border-b-[#dcdcdc] border-l-[#8a8a8a]">
      <div className="flex min-h-0 flex-1">
        <div className="min-w-0 flex-1 bg-white">
          <svg className="h-full w-full" aria-hidden="true">
            <line x1="10.5" x2="10.5" y1="0" y2="100%" stroke="#1f7fb4" strokeDasharray="10 3 3 3" />
            <line x1="0" x2="100%" y1="100%" y2="100%" transform="translate(0 -10.5)" stroke="#1f7fb4" strokeDasharray="10 3 3 3" />
          </svg>
        </div>
        <div className="flex w-4 flex-col items-center justify-between py-1">
          <div className="flex w-full flex-col items-center">
            <Chevron turn="up" />
            <span className="mt-[3px] h-[17px] w-[15px] bg-[#cdcdcd]" />
          </div>
          <Chevron turn="down" />
        </div>
      </div>
      <div className="flex h-4 items-center pr-5 pl-1">
        <Chevron turn="left" />
        <span className="ml-[3px] h-[15px] w-[17px] bg-[#cdcdcd]" />
        <span className="ml-auto flex"><Chevron turn="right" /></span>
      </div>
    </div>
  </main>
);

const ProjectTab = () => (
  <div className="w-[22px] shrink-0 bg-white pt-1 pl-0.5">
    <button type="button" className="flex h-[84px] w-full flex-col items-center border border-r-0 border-[#b0b0b0] bg-[#efefef] pt-0.5">
      <svg width="17" height="17" viewBox="0 0 17 17" aria-hidden="true">
        <path d="M3 7L4 2L7 1L9 2L13 1.5L14 8L9 10Z" fill="#d8d2c4" stroke="#77706a" />
        <path d="M1 7L8 10L16 7V13L8 16.5L1 13Z" fill="#f2a52c" stroke="#b6781c" strokeWidth="0.8" />
        <path d="M8 10V16" stroke="#c8811c" />
      </svg>
      <span className="mt-2 text-[12px] leading-4 text-[#555] [text-orientation:sideways] [writing-mode:vertical-rl]">无方案</span>
    </button>
  </div>
);

const Fold = () => (
  <svg width="16" height="14" viewBox="0 0 16 14" aria-hidden="true">
    <path d="M1.5 12.5V3.5L3 1.5H6.5L8 3.5H14V12.5Z" fill="#fbf87c" stroke="#99993a" />
    <path d="M2 13H14.5V4" fill="none" stroke="#222" />
  </svg>
);

const Toggle = ({ open }: { open: boolean }) => (
  <svg width="9" height="9" viewBox="0 0 9 9" fill="#fff" stroke="#9a9a9a" aria-hidden="true">
    <rect x="0.5" y="0.5" width="8" height="8" />
    <path d={open ? 'M2 4.5H7' : 'M2 4.5H7M4.5 2V7'} stroke="#2f4f9f" />
  </svg>
);

const Dots = ({ wide = false }: { wide?: boolean }) => (
  <span className={`shrink-0 border-t border-dotted border-[#888] ${wide ? 'w-3' : 'w-1.5'}`} />
);

const DesignIcon = () => (
  <svg width="14" height="14" viewBox="0 0 14 14" fill="none" stroke="#222" className="shrink-0" aria-hidden="true">
    <path d="M0.5 2.500H4.500V4.500H8.500V2.500H10.500V1.500H14M0.500 2.500V9.500H3.500L5.500 12.500H8.500L9.500 9.500H14M14 4.500H11.500" />
    <path d="M0 7H14M3.500 3V10M9.500 3V12" stroke="#c8283c" />
  </svg>
);

const ParameterTree = () => {
  const [selected, setSelected] = useState(0);
  const items = ['Folding Carton - Inch - Single design parameters', 'Folding Carton - Metric - Single design parameters'];

  return (
    <div className="flex h-[292px] flex-col justify-between border border-[#828282] bg-white p-px">
      <ul className="overflow-hidden pl-[7px] font-['DejaVu_Sans_Condensed','DejaVu_Sans',sans-serif] text-[11px] leading-4">
        <li className="flex h-4 items-center">
          <Toggle open /><Dots />
          <svg width="17" height="15" viewBox="0 0 17 15" aria-hidden="true">
            <path d="M3.5 11.5V2.5L5 0.5H8L9.5 2.5H15.5V12.5Z" fill="#fbf87c" stroke="#99993a" />
            <path d="M4 13H16V3" fill="none" stroke="#222" />
            <path d="M1 0V14" stroke="#000" />
            <path d="M1 8.5H6V13.5H1Z" fill="#10106a" stroke="#000" />
            <path d="M6 10L9 14H12L13 12" fill="#fff" stroke="#222" />
          </svg>
          <span className="ml-[3px]">Artios</span>
        </li>
        <li className="flex h-4 items-center pl-[19px]"><Toggle open={false} /><Dots /><Fold /><span className="ml-1">Corrugated</span></li>
        <li className="flex h-4 items-center pl-[19px]"><Toggle open /><Dots /><Fold /><span className="ml-1">Folding Carton</span></li>
        {items.map((item, i) => (
          <li key={item} className="ml-[42px] flex h-4 items-center border-l border-dotted border-[#888] whitespace-nowrap">
            <Dots wide />
            <DesignIcon />
            <button
              type="button"
              onClick={() => setSelected(i)}
              className={`ml-[3px] shrink-0 pl-px text-left ${selected === i ? 'bg-[#0078d7] text-white outline-1 -outline-offset-1 outline-dotted outline-[#222]' : ''}`}
            >
              {item}
            </button>
          </li>
        ))}
      </ul>
      <div className="flex h-4 items-center bg-[#f0f0f0] px-1">
        <Chevron turn="left" />
        <span className="mx-[3px] h-[15px] flex-1"><span className="block h-full w-[263px] bg-[#cdcdcd]" /></span>
        <Chevron turn="right" />
      </div>
    </div>
  );
};

const BoardSearch = () => {
  const [query, setQuery] = useState('');

  return (
    <div className="border border-[#646464]">
      <div className="flex h-5 items-center border-b border-[#646464] bg-[#f0f0f0] pl-px">
        <input
          type="text"
          aria-label="查找纸板"
          value={query}
          onChange={e => setQuery(e.target.value)}
          placeholder="查找纸板... (使用'*'和'?' 句法)"
          className="h-[17px] min-w-0 flex-1 border border-[#646464] bg-white pl-px text-[12px] leading-4 outline-none placeholder:text-[#555]"
        />
        <button type="button" aria-label="Find next" className="ml-0.5"><svg width="15" height="12" viewBox="0 0 15 12" fill="none" stroke="#000" strokeWidth="2.2" aria-hidden="true"><path d="M0 6H13M8 1.500L13 6L8 10.500" /></svg></button>
        <button type="button" aria-label="Find previous" className="ml-0.5"><svg width="15" height="12" viewBox="0 0 15 12" fill="none" stroke="#000" strokeWidth="2.2" aria-hidden="true"><path d="M15 6H2M7 1.5L2 6L7 10.5" /></svg></button>
        <button type="button" aria-label="Clear" className="mr-0.5 ml-1"><svg width="13" height="12" viewBox="0 0 13 12" fill="none" stroke="#a03018" strokeWidth="2.2" aria-hidden="true"><path d="M1 1L11 11M11.5 1L1.5 11" /></svg></button>
      </div>
      <div className="h-[246px] bg-white" />
    </div>
  );
};

const Grip = () => (
  <svg width="9" height="9" viewBox="0 0 9 9" fill="#bdbdbd" aria-hidden="true">
    <path d="M7 1H9V3H7ZM7 4H9V6H7ZM7 7H9V9H7ZM4 4H6V6H4ZM4 7H6V9H4ZM1 7H3V9H1Z" />
  </svg>
);

const SettingsDialog = () => (
  <div
    role="dialog"
    aria-labelledby="dialog-title"
    className="absolute top-[118px] left-[377px] flex h-[393px] w-[886px] flex-col border border-[#6c6c6c] bg-[#f0f0f0] text-[12px] shadow-[0_4px_16px_2px_rgba(0,0,0,0.4)]"
  >
    <div className="flex h-[30px] shrink-0 items-center bg-white pr-2.5 pl-2">
      <svg width="15" height="13" viewBox="0 0 15 13" aria-hidden="true">
        <rect x="0.5" y="0.5" width="14" height="12" fill="#e8eef2" stroke="#b0bcc4" />
        <rect x="2" y="2" width="6" height="9" fill="#3f8f88" />
        <rect x="11" y="2" width="2" height="5" fill="#7ba8c8" />
      </svg>
      <h2 id="dialog-title" className="ml-[6px]">单一设计设置</h2>
      <button type="button" aria-label="Close dialog" className="ml-auto">
        <svg width="11" height="11" viewBox="0 0 11 11" stroke="#111" aria-hidden="true"><path d="M0.5 0.5L10.5 10.5M10.5 0.5L0.5 10.5" /></svg>
      </button>
    </div>
    <div className="flex shrink-0 pt-[3px] pl-2">
      <fieldset className="h-[317px] w-[324px] min-w-0 shrink-0 border border-[#dcdcdc] px-[5px]">
        <legend className="px-0.5 leading-4">参数设定</legend>
        <div className="pt-1"><ParameterTree /></div>
      </fieldset>
      <fieldset className="ml-4 h-[317px] w-[522px] min-w-0 shrink-0 border border-[#dcdcdc] pr-[13px] pl-[7px]">
        <legend className="px-px leading-5">纸板</legend>
        <BoardSearch />
        <button type="button" className="mt-[5px] ml-1 h-[19px] w-[127px] border border-[#adadad] bg-[#e1e1e1] leading-4">纸板属性...</button>
      </fieldset>
    </div>
    <button type="button" className="mt-[13px] ml-[58px] h-[21px] w-[73px] border-2 border-[#0078d7] bg-[#e1e1e1] leading-4">确定</button>
    <span className="mt-auto mr-0.5 mb-0.5 self-end"><Grip /></span>
  </div>
);

const App: React.FC = () => (
  <div className="relative flex h-screen flex-col overflow-hidden bg-[#f3f3f3] font-['Noto_Sans','Noto_Sans_CJK_SC',sans-serif] text-black">
    <div className="mx-[7px] flex min-h-0 flex-1 flex-col border border-[#a3a3a3] bg-white shadow-[0_0_8px_rgba(0,0,0,0.3)]">
      <TitleBar />
      <MenuBar />
      <ToolBar />
      <div className="flex min-h-0 flex-1">
        <Palettes />
        <DesignPanel />
        <ProjectTab />
      </div>
      <div className="h-[30px] shrink-0 bg-[#f0f0f0]" />
      <footer className="flex h-[19px] shrink-0 items-center border-t border-[#d7d7d7] bg-[#f0f0f0] pl-1 text-[13px]">
        显示帮助, 请按F1键
        <span className="ml-auto flex h-4 items-end border-l border-[#d7d7d7] pr-[3px] pl-[5px]"><Grip /></span>
      </footer>
    </div>

    {/* Web page showing below the window */}
    <div className="flex h-[7px] shrink-0 items-start justify-end gap-[13px] overflow-hidden bg-[#f8f8f8] pr-8 whitespace-nowrap">
      <p className="w-[176px] rounded-t bg-black text-center text-[20px] leading-6 font-bold text-white">
        <span className="text-[#e8e020]">最新</span>安装教程
      </p>
      <p className="text-[18px] leading-4 text-[#333]">3dmax2020下载安装激活教</p>
    </div>

    <SettingsDialog />
    <p className="absolute top-[360px] left-[1241px] font-['DejaVu_Sans',sans-serif] text-[20px] leading-6 font-bold text-[#750000]">www.dgrai.com</p>
  </div>
);

export default App;
